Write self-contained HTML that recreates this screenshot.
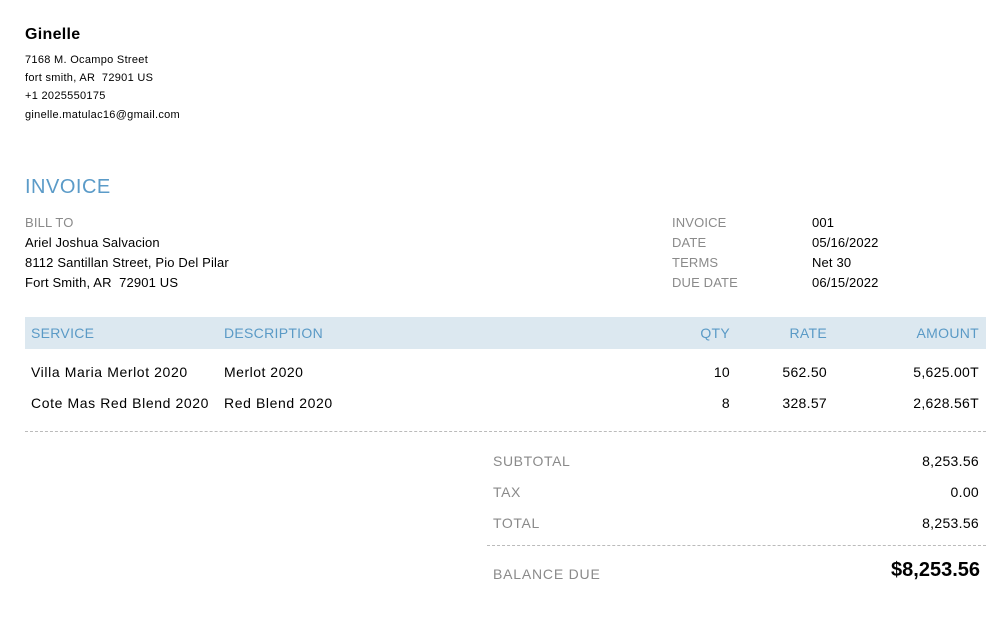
<!DOCTYPE html>
<html><head><style>
body{margin:0;width:1004px;height:632px;background:#fff;font-family:"Liberation Sans",sans-serif;color:#000;position:relative;overflow:hidden}
.a{position:absolute;white-space:nowrap;height:20px;line-height:20px}
.s{font-size:11px;letter-spacing:0.3px}.m{font-size:13px;letter-spacing:0.15px}.l{font-size:14px;letter-spacing:0.3px}
.g{color:#8a8a8a}.b{color:#5a9ac6}
.r{text-align:right}
</style></head><body>
<div class="a" style="left:25px;top:25px;font-size:16px;font-weight:bold;letter-spacing:0.3px">Ginelle</div>
<div class="a s" style="left:25px;top:50px">7168 M. Ocampo Street</div>
<div class="a s" style="left:25px;top:68px">fort smith, AR&nbsp; 72901 US</div>
<div class="a s" style="left:25px;top:86px">+1 2025550175</div>
<div class="a s" style="left:25px;top:105px">ginelle.matulac16@gmail.com</div>
<div class="a" style="left:25px;top:175px;font-size:20px;height:24px;line-height:24px;color:#5b9bc8;letter-spacing:0.5px">INVOICE</div>
<div class="a m g" style="left:25px;top:213px">BILL TO</div>
<div class="a m" style="left:25px;top:233px">Ariel Joshua Salvacion</div>
<div class="a m" style="left:25px;top:253px">8112 Santillan Street, Pio Del Pilar</div>
<div class="a m" style="left:25px;top:273px">Fort Smith, AR&nbsp; 72901 US</div>
<div class="a m g" style="left:672px;top:213px">INVOICE</div>
<div class="a m g" style="left:672px;top:233px">DATE</div>
<div class="a m g" style="left:672px;top:253px">TERMS</div>
<div class="a m g" style="left:672px;top:273px">DUE DATE</div>
<div class="a m" style="left:812px;top:213px">001</div>
<div class="a m" style="left:812px;top:233px">05/16/2022</div>
<div class="a m" style="left:812px;top:253px">Net 30</div>
<div class="a m" style="left:812px;top:273px">06/15/2022</div>
<div style="position:absolute;left:25px;top:317px;width:961px;height:32px;background:#dce8f0"></div>
<div class="a l b" style="left:31px;top:323px">SERVICE</div>
<div class="a l b" style="left:224px;top:323px">DESCRIPTION</div>
<div class="a l b r" style="right:274px;top:323px">QTY</div>
<div class="a l b r" style="right:177px;top:323px">RATE</div>
<div class="a l b r" style="right:25px;top:323px">AMOUNT</div>
<div class="a l" style="left:31px;top:362px;letter-spacing:0.6px">Villa Maria Merlot 2020</div>
<div class="a l" style="left:224px;top:362px;letter-spacing:0.5px">Merlot 2020</div>
<div class="a l r" style="right:274px;top:362px">10</div>
<div class="a l r" style="right:177px;top:362px">562.50</div>
<div class="a l r" style="right:25px;top:362px">5,625.00T</div>
<div class="a l" style="left:31px;top:393px;letter-spacing:0.6px">Cote Mas Red Blend 2020</div>
<div class="a l" style="left:224px;top:393px;letter-spacing:0.6px">Red Blend 2020</div>
<div class="a l r" style="right:274px;top:393px">8</div>
<div class="a l r" style="right:177px;top:393px">328.57</div>
<div class="a l r" style="right:25px;top:393px">2,628.56T</div>
<div style="position:absolute;left:25px;top:431px;width:961px;border-top:1px dashed #bbb"></div>
<div class="a l g" style="left:493px;top:451px;letter-spacing:0.6px">SUBTOTAL</div>
<div class="a l g" style="left:493px;top:482px;letter-spacing:0.6px">TAX</div>
<div class="a l g" style="left:493px;top:513px;letter-spacing:0.6px">TOTAL</div>
<div class="a l r" style="right:25px;top:451px">8,253.56</div>
<div class="a l r" style="right:25px;top:482px">0.00</div>
<div class="a l r" style="right:25px;top:513px">8,253.56</div>
<div style="position:absolute;left:487px;top:545px;width:499px;border-top:1px dashed #bbb"></div>
<div class="a l g" style="left:493px;top:564px;letter-spacing:0.8px">BALANCE DUE</div>
<div class="a r" style="right:24px;top:558px;font-size:20px;font-weight:bold;height:24px;line-height:24px">$8,253.56</div>
</body></html>
